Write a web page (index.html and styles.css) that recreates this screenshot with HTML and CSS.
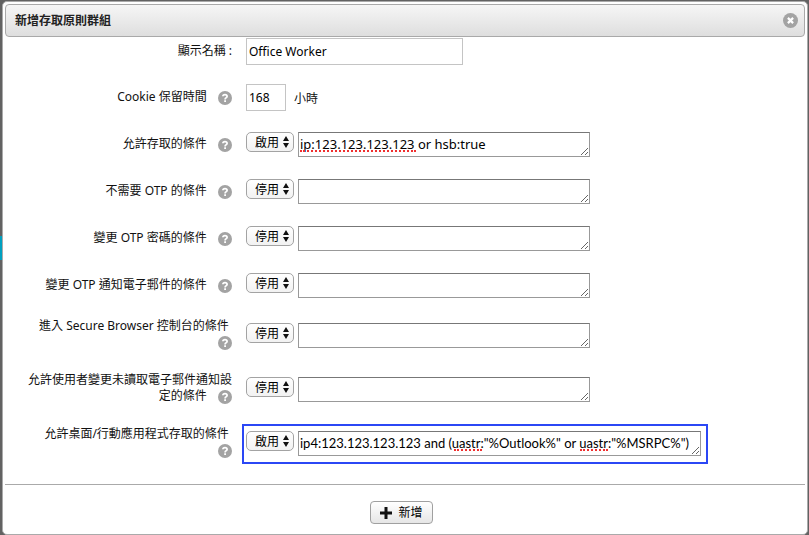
FILE: index.html
```html
<!DOCTYPE html>
<html lang="zh-Hant">
<head>
<meta charset="utf-8">
<title>新增存取原則群組</title>
<link rel="stylesheet" href="styles.css">
</head>
<body>
<svg class="defs" aria-hidden="true">
  <symbol id="help" viewBox="0 0 14 14"><circle cx="7" cy="7" r="7" fill="#a3a3a3"/><path d="M4.9 5.3Q5 3.6 7 3.6T9.1 5.3Q9.1 6.2 8.1 6.8Q7.1 7.3 7.1 8.4" fill="none" stroke="#fff" stroke-width="1.8"/><path d="M6.2 9.3h1.8v1.7H6.2z" fill="#fff"/></symbol>
  <symbol id="updown" viewBox="0 0 6 12"><path d="M3 0l3 5H0zM3 12L0 7h6z" fill="#111"/></symbol>
</svg>
<main class="dialog">
  <header class="titlebar">
    <h1>新增存取原則群組</h1>
    <button class="close" type="button" aria-label="關閉"><svg viewBox="0 0 15 15"><circle cx="7.5" cy="7.5" r="7.5" fill="#a3a3a3"/><path d="M4.9 4.9l5.2 5.2M10.100 4.900l-5.200 5.200" stroke="#fff" stroke-width="2.200"/></svg></button>
  </header>
  <form>
    <div class="row row-first">
      <label class="label" for="name">顯示名稱 :</label>
      <div class="controls"><input class="text name" id="name" value="Office Worker"></div>
    </div>
    <div class="row">
      <div class="label"><label for="cookie">Cookie 保留時間</label>&nbsp; <svg class="help"><use href="#help"/></svg></div>
      <div class="controls"><input class="text hours" id="cookie" value="168"><span class="unit">小時</span></div>
    </div>
    <div class="row">
      <div class="label"><label for="c1">允許存取的條件</label>&nbsp; <svg class="help"><use href="#help"/></svg></div>
      <div class="controls">
        <span class="pick"><select aria-label="允許存取的條件"><option>啟用</option><option>停用</option></select><svg><use href="#updown"/></svg></span>
        <span class="area"><textarea id="c1" rows="1" spellcheck="false">ip:123.123.123.123 or hsb:true</textarea><i class="squiggle squiggle-ip"></i></span>
      </div>
    </div>
    <div class="row">
      <div class="label"><label for="c2">不需要 OTP 的條件</label>&nbsp; <svg class="help"><use href="#help"/></svg></div>
      <div class="controls">
        <span class="pick"><select aria-label="不需要 OTP 的條件"><option>停用</option><option>啟用</option></select><svg><use href="#updown"/></svg></span>
        <span class="area"><textarea id="c2" rows="1"></textarea></span>
      </div>
    </div>
    <div class="row">
      <div class="label"><label for="c3">變更 OTP 密碼的條件</label>&nbsp; <svg class="help"><use href="#help"/></svg></div>
      <div class="controls">
        <span class="pick"><select aria-label="變更 OTP 密碼的條件"><option>停用</option><option>啟用</option></select><svg><use href="#updown"/></svg></span>
        <span class="area"><textarea id="c3" rows="1"></textarea></span>
      </div>
    </div>
    <div class="row">
      <div class="label"><label for="c4">變更 OTP 通知電子郵件的條件</label>&nbsp; <svg class="help"><use href="#help"/></svg></div>
      <div class="controls">
        <span class="pick"><select aria-label="變更 OTP 通知電子郵件的條件"><option>停用</option><option>啟用</option></select><svg><use href="#updown"/></svg></span>
        <span class="area"><textarea id="c4" rows="1"></textarea></span>
      </div>
    </div>
    <div class="row row-tall">
      <div class="label"><label for="c5">進入 Secure Browser 控制台的條件</label>&nbsp; <svg class="help"><use href="#help"/></svg></div>
      <div class="controls">
        <span class="pick"><select aria-label="進入 Secure Browser 控制台的條件"><option>停用</option><option>啟用</option></select><svg><use href="#updown"/></svg></span>
        <span class="area"><textarea id="c5" rows="1"></textarea></span>
      </div>
    </div>
    <div class="row row-tall">
      <div class="label"><label for="c6">允許使用者變更未讀取電子郵件通知設定的條件</label>&nbsp; <svg class="help"><use href="#help"/></svg></div>
      <div class="controls">
        <span class="pick"><select aria-label="允許使用者變更未讀取電子郵件通知設定的條件"><option>停用</option><option>啟用</option></select><svg><use href="#updown"/></svg></span>
        <span class="area"><textarea id="c6" rows="1"></textarea></span>
      </div>
    </div>
    <div class="row row-tall">
      <div class="label"><label for="c7">允許桌面/行動應用程式存取的條件</label>&nbsp; <svg class="help"><use href="#help"/></svg></div>
      <div class="controls highlighted">
        <span class="pick"><select aria-label="允許桌面/行動應用程式存取的條件"><option>啟用</option><option>停用</option></select><svg><use href="#updown"/></svg></span>
        <span class="area area-wide"><textarea id="c7" rows="1" spellcheck="false">ip4:123.123.123.123 and (uastr:"%Outlook%" or uastr:"%MSRPC%")</textarea><i class="squiggle squiggle-first"></i><i class="squiggle squiggle-second"></i></span>
      </div>
    </div>
    <footer>
      <button class="add" type="button"><svg viewBox="0 0 12 12"><path d="M4.500 0h3v4.500H12v3H7.500V12h-3V7.500H0v-3h4.500z" fill="#111"/></svg>新增</button>
    </footer>
  </form>
</main>
</body>
</html>
```
FILE: styles.css
```css
* { box-sizing: border-box; }
html { min-height: 100%; background: linear-gradient(#00a0c0, #00a0c0) 0 236px / 2px 24px no-repeat, #626262; }
body {
  margin: 0;
  padding: 1px 1px 0 2px;
  font: 12px/16px "Noto Sans", "Noto Sans CJK TC", sans-serif;
  color: #111;
}
input, select, textarea, button { font: inherit; color: #000; margin: 0; }
.defs { position: absolute; width: 0; height: 0; }

.dialog {
  min-height: calc(100vh - 1px);
  padding: 2px;
  background: #fff;
  border: 1px solid #aaa;
  border-radius: 5px;
}
.titlebar {
  display: flex;
  align-items: center;
  justify-content: space-between;
  height: 33px;
  padding: 0 6px 0 9px;
  border: 1px solid #a9a9a9;
  border-radius: 4px;
  background: linear-gradient(#f6f6f6, #dedede);
}
h1 { margin: 0; font-size: 12px; font-weight: 700; color: #222; }
.close { width: 15px; height: 15px; padding: 0; border: 0; background: none; }
.close svg { display: block; width: 15px; height: 15px; }

.row {
  display: grid;
  grid-template-columns: 205px 1fr;
  column-gap: 10px;
  align-items: center;
  min-height: 47px;
  padding-left: 22px;
}
.row-tall { min-height: 54px; }
.row-first { align-items: start; min-height: 37px; padding-top: 1px; }
.label { padding-bottom: 2px; text-align: right; }
.row-tall .label { padding-bottom: 4px; }
.row-first .label { padding-top: 5px; }
.row-first .controls { padding-top: 0; padding-bottom: 0; border-top: 0; }
.help { width: 14px; height: 14px; margin-left: 5px; vertical-align: -4px; }

.controls {
  display: flex;
  align-items: flex-start;
  justify-self: start;
  gap: 4px;
  padding: 5px 5px 6px 2px;
  border: 2px solid transparent;
}
.highlighted { border-color: #2b47f5; }
.text { height: 27px; padding: 0 2px; border: 1px solid #c4c4c4; background: #fff; }
.name { width: 217px; }
.hours { width: 40px; }
.unit { padding: 7px 4px 0; }

.pick { position: relative; display: block; width: 48px; height: 20px; }
.pick select {
  appearance: none;
  width: 100%;
  height: 100%;
  padding: 2px 0 0 8px;
  border: 1px solid #a3a3a3;
  border-radius: 5px;
  background: linear-gradient(#fff, #f2f2f2);
}
.pick svg { position: absolute; top: 4px; right: 5px; width: 6px; height: 12px; pointer-events: none; }

.area { position: relative; display: block; width: 292px; }
.area-wide { width: 403px; }
textarea {
  display: block;
  width: 100%;
  height: 25px;
  padding: 3px 1px;
  border: 1px solid #999;
  border-top-color: #777;
  border-radius: 0;
  background: #fff;
  font-size: 13px;
  white-space: pre;
  overflow: hidden;
}
.area-wide textarea { font-family: Lato, "Noto Sans", sans-serif; }
.squiggle { position: absolute; top: 18px; border-bottom: 2px dotted #f03030; pointer-events: none; }
.squiggle-ip { left: 2px; width: 116px; }
.squiggle-first { left: 156px; width: 28px; }
.squiggle-second { left: 282px; width: 28px; }

footer { margin-top: 13px; padding: 16px 7px 0 0; border-top: 1px solid #aaa; text-align: center; }
.add {
  display: inline-flex;
  align-items: center;
  gap: 6px;
  height: 23px;
  padding: 0 9px;
  border: 1px solid #a0a0a0;
  border-radius: 4px;
  background: linear-gradient(#fff, #e6e6e6);
}
.add svg { width: 12px; height: 12px; }
```
